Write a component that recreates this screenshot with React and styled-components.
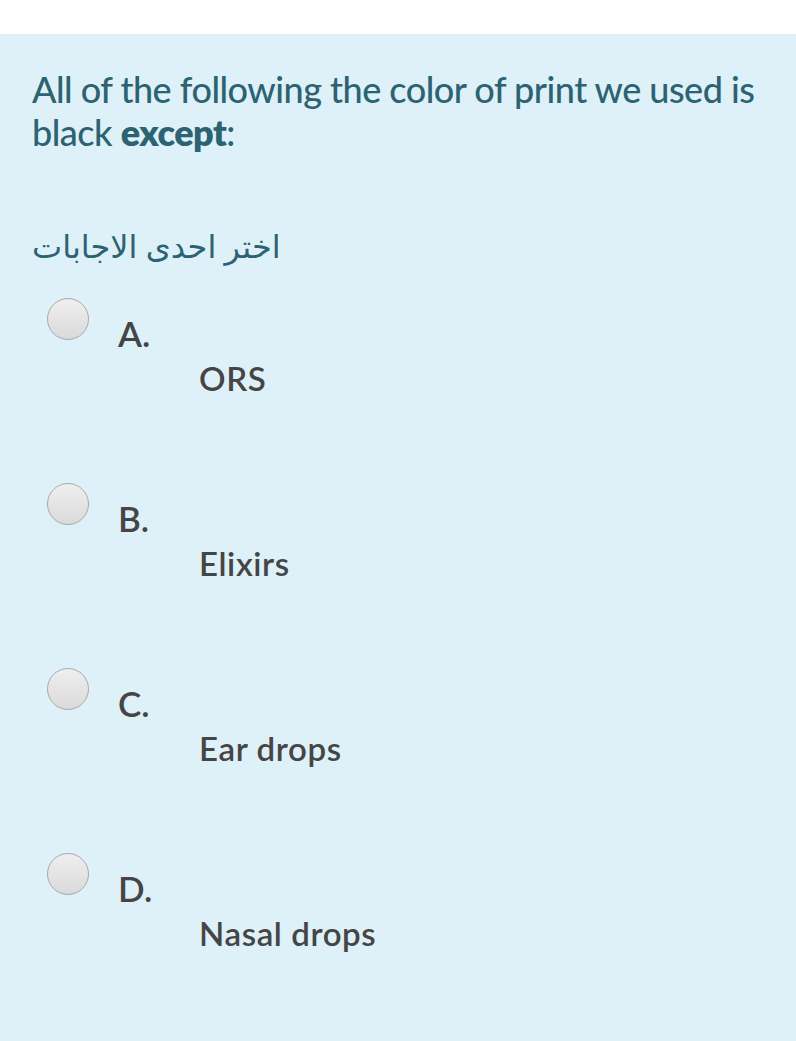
import React from "react";
import styled, { createGlobalStyle } from "styled-components";

const Global = createGlobalStyle`
  html, body { margin: 0; padding: 0; background: #ffffff; }
  body { font-family: Lato, "Open Sans", sans-serif; }
`;

const Page = styled.div`
  padding-top: 34px;
  background: #ffffff;
`;

const Panel = styled.div`
  background: #dff1f8;
  min-height: 1007px;
  box-sizing: border-box;
  padding: 34px 32px 0 32px;
`;

const Question = styled.div`
  color: #2c6373;
  font-size: 36px;
  line-height: 43px;
  font-weight: 500;
  letter-spacing: -0.5px;
  strong { font-weight: 800; }
`;

const Prompt = styled.div`
  margin-top: 70px;
  font-family: "Noto Sans", "DejaVu Sans", sans-serif;
  color: #2c6373;
  font-size: 32px;
  line-height: 44px;
  direction: rtl;
  text-align: left;
  width: 250px;
`;

const Options = styled.div`
  margin-top: 30px;
  display: flex;
  flex-direction: column;
`;

const Option = styled.label`
  display: flex;
  align-items: flex-start;
  height: 185px;
`;

const Radio = styled.span`
  width: 40px;
  height: 40px;
  margin-left: 15px;
  border-radius: 50%;
  border: 1px solid #aaaaaa;
  background: linear-gradient(#efefef, #dadada);
  flex-shrink: 0;
`;

const Body = styled.div`
  margin-left: 29px;
  display: flex;
  flex-direction: column;
  color: #454545;
`;

const Letter = styled.span`
  font-size: 35px;
  line-height: 40px;
  margin-top: 15px;
  font-weight: 600;
`;

const Answer = styled.span`
  margin-left: 81px;
  margin-top: 6px;
  font-size: 33px;
  line-height: 38px;
  font-weight: 600;
  letter-spacing: 0.6px;
`;

const options = [
  ["A.", "ORS"],
  ["B.", "Elixirs"],
  ["C.", "Ear drops"],
  ["D.", "Nasal drops"],
];

export default function App() {
  return (
    <Page>
      <Global />
      <Panel>
        <Question>
          All of the following the color of print we used is black <strong>except</strong>:
        </Question>
        <Prompt>اختر احدى الاجابات</Prompt>
        <Options>
          {options.map(([l, t]) => (
            <Option key={l}>
              <Radio />
              <Body>
                <Letter>{l}</Letter>
                <Answer>{t}</Answer>
              </Body>
            </Option>
          ))}
        </Options>
      </Panel>
    </Page>
  );
}
